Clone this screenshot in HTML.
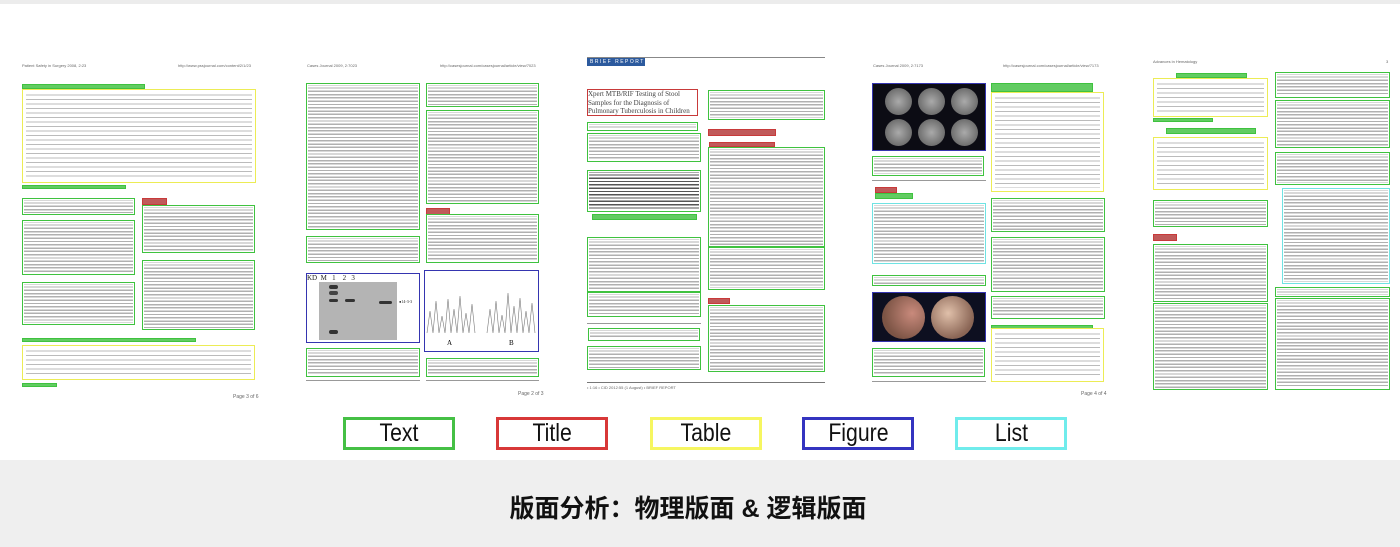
<!DOCTYPE html>
<html><head><meta charset="utf-8"><style>
*{margin:0;padding:0;box-sizing:border-box}
body{width:1400px;height:547px;position:relative;background:#fff;overflow:hidden;font-family:"Liberation Sans",sans-serif}
.a{position:absolute}
.g,.r,.y,.b,.c,.gc{position:absolute}
.g{border:1.5px solid #3fc23f;padding:1px;background:repeating-linear-gradient(to bottom,#b0b0b0 0,#b0b0b0 1.4px,#fff 1.4px,#fff 3.3px);background-clip:content-box}
.gc{border:1.5px solid #3fc23f;background:#62cc62}
.r{border:1.5px solid #c83a3a;background:#c05a5a}
.y{border:1.5px solid #ecec55;padding:3px;background:repeating-linear-gradient(to bottom,#bbb 0,#bbb 1px,#fff 1px,#fff 4.5px);background-clip:content-box}
.b{border:1.5px solid #3535b0}
.c{border:1.5px solid #6fe3e3;padding:1px;background:repeating-linear-gradient(to bottom,#b0b0b0 0,#b0b0b0 1.4px,#fff 1.4px,#fff 3.3px);background-clip:content-box}
.h{position:absolute;font-size:4px;color:#666;white-space:nowrap}
.leg{position:absolute;top:417px;width:112px;height:33px;border:3px solid;text-align:center;line-height:27px;color:#111}
.leg span{display:inline-block;font-size:25px;transform:scaleX(.85)}
.ln{position:absolute;height:1px;background:#999}
</style></head><body>
<div class="a" style="left:0;top:0;width:1400px;height:4px;background:#ececec"></div>

<!-- page 1 -->
<div class="h" style="left:22px;top:63px">Patient Safety in Surgery 2008, 2:23</div>
<div class="h" style="left:178px;top:63px">http://www.pssjournal.com/content/2/1/23</div>
<div class="gc" style="left:22px;top:84px;width:123px;height:5px"></div>
<div class="y" style="left:22px;top:89px;width:234px;height:94px"></div>
<div class="gc" style="left:22px;top:185px;width:104px;height:4px"></div>
<div class="g" style="left:22px;top:198px;width:113px;height:17px"></div>
<div class="r" style="left:142px;top:198px;width:25px;height:7px"></div>
<div class="g" style="left:142px;top:205px;width:113px;height:48px"></div>
<div class="g" style="left:22px;top:220px;width:113px;height:55px"></div>
<div class="g" style="left:142px;top:260px;width:113px;height:70px"></div>
<div class="g" style="left:22px;top:282px;width:113px;height:43px"></div>
<div class="gc" style="left:22px;top:338px;width:174px;height:4px"></div>
<div class="y" style="left:22px;top:345px;width:233px;height:35px"></div>
<div class="gc" style="left:22px;top:383px;width:35px;height:4px"></div>
<div class="h" style="left:233px;top:394px;font-size:5px">Page 3 of 6</div>

<!-- page 2 -->
<div class="h" style="left:307px;top:63px">Cases Journal 2009, 2:7023</div>
<div class="h" style="left:440px;top:63px">http://casesjournal.com/casesjournal/article/view/7023</div>
<div class="g" style="left:306px;top:83px;width:114px;height:147px"></div>
<div class="g" style="left:426px;top:83px;width:113px;height:24px"></div>
<div class="g" style="left:426px;top:110px;width:113px;height:94px"></div>
<div class="r" style="left:426px;top:208px;width:24px;height:7px"></div>
<div class="g" style="left:426px;top:214px;width:113px;height:49px"></div>
<div class="g" style="left:306px;top:236px;width:114px;height:27px"></div>
<div class="b" style="left:306px;top:273px;width:114px;height:70px;background:#fff">
  <div class="a" style="left:0;top:0;font:7px 'Liberation Serif',serif;color:#222;white-space:nowrap">KD&nbsp;&nbsp;M&nbsp;&nbsp;&nbsp;1&nbsp;&nbsp;&nbsp;&nbsp;2&nbsp;&nbsp;&nbsp;3</div>
  <div class="a" style="left:12px;top:8px;width:78px;height:58px;background:#b4b4b4"></div>
  <div class="a" style="left:22px;top:11px;width:9px;height:4px;background:#333;border-radius:2px"></div>
  <div class="a" style="left:22px;top:17px;width:9px;height:4px;background:#444;border-radius:2px"></div>
  <div class="a" style="left:22px;top:25px;width:9px;height:3px;background:#333;border-radius:2px"></div>
  <div class="a" style="left:38px;top:25px;width:10px;height:3px;background:#333;border-radius:2px"></div>
  <div class="a" style="left:72px;top:27px;width:13px;height:3px;background:#333;border-radius:2px"></div>
  <div class="a" style="left:22px;top:56px;width:9px;height:4px;background:#333;border-radius:2px"></div>
  <div class="a" style="left:92px;top:25px;font:4px serif;color:#222">●14-3-3</div>
</div>
<div class="b" style="left:424px;top:270px;width:115px;height:82px;background:#fff">
  <svg class="a" style="left:0;top:0" width="112" height="79" viewBox="0 0 112 79"><g fill="none" stroke="#777" stroke-width=".6"><path d="M2 62 L5 40 L8 62 L11 30 L14 62 L17 45 L20 62 L23 28 L26 62 L29 38 L32 62 L35 25 L38 62 L41 42 L44 62 L47 33 L50 62"/><path d="M62 62 L65 38 L68 62 L71 30 L74 62 L77 44 L80 62 L83 22 L86 62 L89 35 L92 62 L95 27 L98 62 L101 40 L104 62 L107 32 L110 62"/></g><text x="22" y="74" font-size="7" font-family="Liberation Serif">A</text><text x="84" y="74" font-size="7" font-family="Liberation Serif">B</text></svg>
</div>
<div class="g" style="left:306px;top:348px;width:114px;height:29px"></div>
<div class="g" style="left:426px;top:358px;width:113px;height:19px"></div>
<div class="ln" style="left:306px;top:380px;width:114px"></div>
<div class="ln" style="left:426px;top:380px;width:113px"></div>
<div class="h" style="left:518px;top:391px;font-size:5px">Page 2 of 3</div>

<!-- page 3 -->
<div class="ln" style="left:587px;top:57px;width:238px;background:#888"></div>
<div class="a" style="left:587px;top:58px;width:58px;height:8px;background:#2c5a9e;color:#fff;font-size:5px;line-height:8px;letter-spacing:1.5px;padding-left:3px">BRIEF REPORT</div>
<div class="a" style="left:587px;top:89px;width:111px;height:27px;border:1.5px solid #c83a3a;font:7px/8.5px 'Liberation Serif',serif;color:#444;overflow:hidden;white-space:nowrap">Xpert MTB/RIF Testing of Stool<br>Samples for the Diagnosis of<br>Pulmonary Tuberculosis in Children</div>
<div class="g" style="left:587px;top:122px;width:111px;height:9px"></div>
<div class="g" style="left:587px;top:133px;width:114px;height:29px"></div>
<div class="g" style="left:587px;top:170px;width:114px;height:42px;background:repeating-linear-gradient(to bottom,#555 0,#555 1.3px,#fff 1.3px,#fff 3.3px);background-clip:content-box"></div>
<div class="gc" style="left:592px;top:214px;width:105px;height:6px"></div>
<div class="g" style="left:587px;top:237px;width:114px;height:55px"></div>
<div class="g" style="left:587px;top:292px;width:114px;height:25px"></div>
<div class="ln" style="left:587px;top:323px;width:114px"></div>
<div class="g" style="left:588px;top:328px;width:112px;height:13px"></div>
<div class="g" style="left:587px;top:346px;width:114px;height:24px"></div>
<div class="g" style="left:708px;top:90px;width:117px;height:30px"></div>
<div class="r" style="left:708px;top:129px;width:68px;height:7px"></div>
<div class="r" style="left:709px;top:142px;width:66px;height:5px"></div>
<div class="g" style="left:708px;top:147px;width:117px;height:100px"></div>
<div class="g" style="left:708px;top:247px;width:117px;height:43px"></div>
<div class="r" style="left:708px;top:298px;width:22px;height:6px"></div>
<div class="g" style="left:708px;top:305px;width:117px;height:67px"></div>
<div class="ln" style="left:587px;top:382px;width:238px;background:#777"></div>
<div class="h" style="left:587px;top:385px">• 1:16 • CID 2012:55 (1 August) • BRIEF REPORT</div>

<!-- page 4 -->
<div class="h" style="left:873px;top:63px">Cases Journal 2009, 2:7173</div>
<div class="h" style="left:1003px;top:63px">http://casesjournal.com/casesjournal/article/view/7173</div>
<div class="b" style="left:872px;top:83px;width:114px;height:68px;background:#0c0c14">
  <div class="a" style="left:12px;top:4px;width:27px;height:27px;border-radius:50%;background:radial-gradient(#aaa,#555)"></div>
  <div class="a" style="left:45px;top:4px;width:27px;height:27px;border-radius:50%;background:radial-gradient(#aaa,#555)"></div>
  <div class="a" style="left:78px;top:4px;width:27px;height:27px;border-radius:50%;background:radial-gradient(#aaa,#555)"></div>
  <div class="a" style="left:12px;top:35px;width:27px;height:27px;border-radius:50%;background:radial-gradient(#aaa,#555)"></div>
  <div class="a" style="left:45px;top:35px;width:27px;height:27px;border-radius:50%;background:radial-gradient(#aaa,#555)"></div>
  <div class="a" style="left:78px;top:35px;width:27px;height:27px;border-radius:50%;background:radial-gradient(#aaa,#555)"></div>
</div>
<div class="g" style="left:872px;top:156px;width:112px;height:20px"></div>
<div class="ln" style="left:872px;top:180px;width:114px"></div>
<div class="r" style="left:875px;top:187px;width:22px;height:6px"></div>
<div class="gc" style="left:875px;top:193px;width:38px;height:6px"></div>
<div class="c" style="left:872px;top:203px;width:114px;height:61px"></div>
<div class="g" style="left:872px;top:275px;width:114px;height:11px"></div>
<div class="b" style="left:872px;top:292px;width:114px;height:50px;background:#0d0f20">
  <div class="a" style="left:9px;top:3px;width:43px;height:43px;border-radius:50%;background:radial-gradient(circle at 70% 40%,#c98a7c,#7c5445 70%)"></div>
  <div class="a" style="left:58px;top:3px;width:43px;height:43px;border-radius:50%;background:radial-gradient(circle at 40% 40%,#e0c0aa,#8a6555 70%)"></div>
</div>
<div class="g" style="left:872px;top:348px;width:113px;height:29px"></div>
<div class="ln" style="left:872px;top:381px;width:114px"></div>
<div class="gc" style="left:991px;top:83px;width:102px;height:9px"></div>
<div class="y" style="left:991px;top:92px;width:113px;height:100px"></div>
<div class="g" style="left:991px;top:198px;width:114px;height:34px"></div>
<div class="g" style="left:991px;top:237px;width:114px;height:55px"></div>
<div class="g" style="left:991px;top:296px;width:114px;height:23px"></div>
<div class="gc" style="left:991px;top:325px;width:102px;height:4px"></div>
<div class="y" style="left:991px;top:328px;width:113px;height:54px"></div>
<div class="h" style="left:1081px;top:391px;font-size:5px">Page 4 of 4</div>

<!-- page 5 -->
<div class="h" style="left:1153px;top:59px">Advances in Hematology</div>
<div class="h" style="left:1386px;top:59px">3</div>
<div class="gc" style="left:1176px;top:73px;width:71px;height:5px"></div>
<div class="y" style="left:1153px;top:78px;width:115px;height:39px"></div>
<div class="gc" style="left:1153px;top:118px;width:60px;height:4px"></div>
<div class="gc" style="left:1166px;top:128px;width:90px;height:6px"></div>
<div class="y" style="left:1153px;top:137px;width:115px;height:53px"></div>
<div class="g" style="left:1153px;top:200px;width:115px;height:27px"></div>
<div class="r" style="left:1153px;top:234px;width:24px;height:7px"></div>
<div class="g" style="left:1153px;top:244px;width:115px;height:58px"></div>
<div class="g" style="left:1153px;top:303px;width:115px;height:87px"></div>
<div class="g" style="left:1275px;top:72px;width:115px;height:26px"></div>
<div class="g" style="left:1275px;top:100px;width:115px;height:48px"></div>
<div class="g" style="left:1275px;top:152px;width:115px;height:33px"></div>
<div class="c" style="left:1282px;top:188px;width:108px;height:96px"></div>
<div class="g" style="left:1275px;top:287px;width:115px;height:10px"></div>
<div class="g" style="left:1275px;top:298px;width:115px;height:92px"></div>

<!-- legend -->
<div class="leg" style="left:343px;border-color:#45c045"><span>Text</span></div>
<div class="leg" style="left:496px;border-color:#d83838"><span>Title</span></div>
<div class="leg" style="left:650px;border-color:#f6f660"><span>Table</span></div>
<div class="leg" style="left:802px;border-color:#3434c0"><span>Figure</span></div>
<div class="leg" style="left:955px;border-color:#70ecec"><span>List</span></div>

<div class="a" style="left:0;top:460px;width:1400px;height:87px;background:#efefef"></div>
<div class="a" style="left:0;top:493px;width:1376px;text-align:center;font:bold 25px/32px 'Liberation Sans','Noto Sans CJK SC',sans-serif;color:#111">版面分析：物理版面 &amp; 逻辑版面</div>
</body></html>
